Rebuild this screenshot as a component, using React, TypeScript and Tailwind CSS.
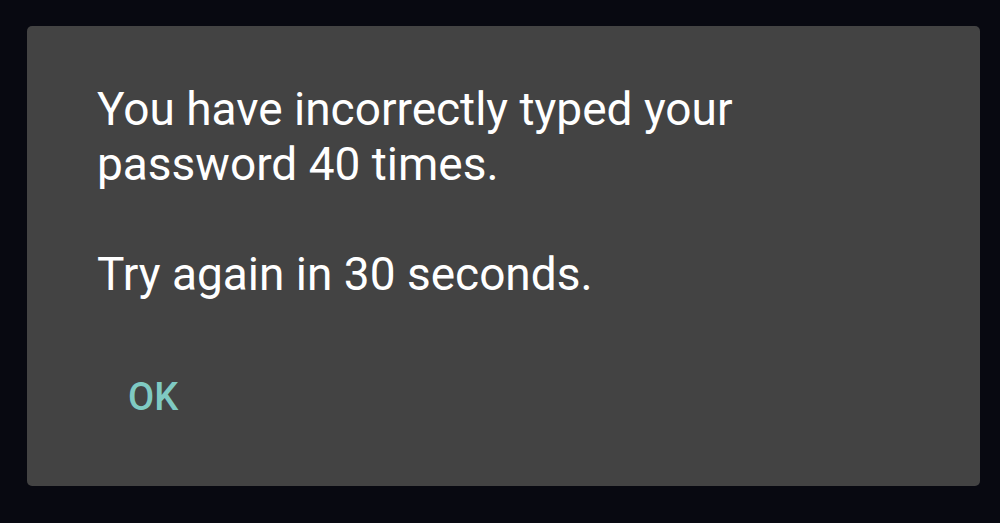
export default function App() {
  return (
    <main className="flex h-[523px] w-[1000px] items-start bg-[#080911] pl-[27px] pt-[26px] font-['Roboto',sans-serif]">
      <div className="flex h-[460px] w-[953px] flex-col rounded-[5px] bg-[#434343] pl-[70px] pt-[56px]">
        <p className="text-[46px] leading-[55px] text-white">
          You have incorrectly typed your
          <br />
          password 40 times.
        </p>
        <p className="mt-[55px] text-[46px] leading-[55px] text-white">
          Try again in 30 seconds.
        </p>
        <div className="mt-[76px] flex">
          <button className="pl-[31px] text-[38px] font-medium leading-none text-[#7fcac3]">
            OK
          </button>
        </div>
      </div>
    </main>
  );
}
